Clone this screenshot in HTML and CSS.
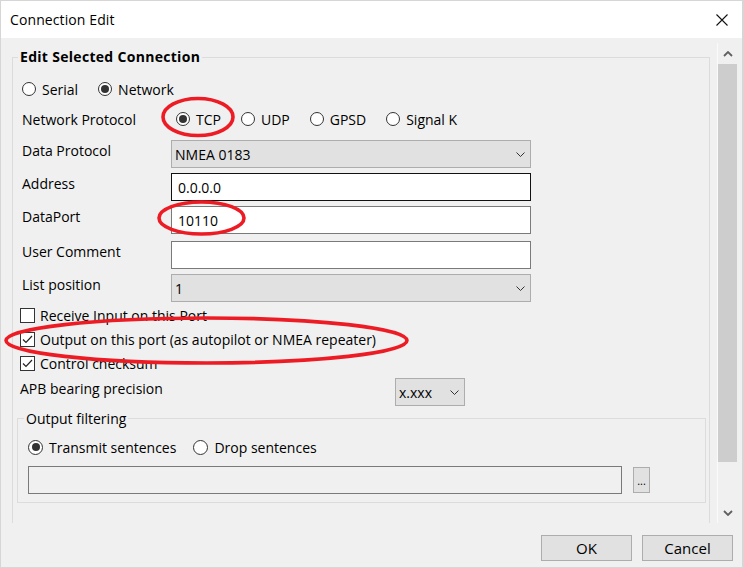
FILE: index.html
```html
<!DOCTYPE html>
<html>
<head>
<meta charset="utf-8">
<link rel="stylesheet" href="styles.css">
</head>
<body>
<div class="window">
  <div class="titlebar">
    <span class="title">Connection Edit</span>
    <svg class="close" width="12" height="12" viewBox="0 0 12 12"><path d="M0.5 0.5L11.5 11.5M11.5 0.5L0.5 11.5" stroke="#111" stroke-width="1.1" fill="none"/></svg>
  </div>
  <div class="body">
    <div class="scroller">
      <div class="pane">
        <div class="group">
          <div class="group-title">Edit Selected Connection</div>
          <div class="row r-type">
            <span class="opt"><span class="radio"></span>Serial</span>
            <span class="opt"><span class="radio on"></span>Network</span>
          </div>
          <div class="row r-proto">
            <span class="proto-label">Network Protocol</span>
            <span class="opt"><span class="radio on"></span>TCP</span>
            <span class="opt"><span class="radio"></span>UDP</span>
            <span class="opt"><span class="radio"></span>GPSD</span>
            <span class="opt"><span class="radio"></span>Signal K</span>
          </div>
          <div class="field f-data">
            <span class="label">Data Protocol</span>
            <div class="select wide"><span>NMEA 0183</span><svg class="chev" width="9" height="5" viewBox="0 0 9 5"><path d="M0.5 0.5L4.5 4.5L8.5 0.5" stroke="#333" fill="none"/></svg></div>
          </div>
          <div class="field f-addr">
            <span class="label">Address</span>
            <div class="input focus">0.0.0.0</div>
          </div>
          <div class="field f-port">
            <span class="label">DataPort</span>
            <div class="input">10110</div>
          </div>
          <div class="field f-comment">
            <span class="label">User Comment</span>
            <div class="input"></div>
          </div>
          <div class="field f-list">
            <span class="label">List position</span>
            <div class="select wide"><span>1</span><svg class="chev" width="9" height="5" viewBox="0 0 9 5"><path d="M0.5 0.5L4.5 4.5L8.5 0.5" stroke="#333" fill="none"/></svg></div>
          </div>
          <div class="check-row c-first"><span class="check"></span>Receive Input on this Port</div>
          <div class="check-row"><span class="check on"><svg width="11" height="9" viewBox="0 0 11 9"><path d="M1 4.5L4 7.5L10 1" stroke="#222" stroke-width="1.2" fill="none"/></svg></span>Output on this port (as autopilot or NMEA repeater)</div>
          <div class="check-row"><span class="check on"><svg width="11" height="9" viewBox="0 0 11 9"><path d="M1 4.5L4 7.5L10 1" stroke="#222" stroke-width="1.2" fill="none"/></svg></span>Control checksum</div>
          <div class="field f-apb">
            <span class="label apb-label">APB bearing precision</span>
            <div class="select small"><span>x.xxx</span><svg class="chev" width="9" height="5" viewBox="0 0 9 5"><path d="M0.5 0.5L4.5 4.5L8.5 0.5" stroke="#333" fill="none"/></svg></div>
          </div>
          <div class="subgroup">
            <div class="sub-title">Output filtering</div>
            <div class="row r-filter">
              <span class="opt tight"><span class="radio big on"></span>Transmit sentences</span>
              <span class="opt tight"><span class="radio big"></span>Drop sentences</span>
            </div>
            <div class="filter-row">
              <div class="filter-input"></div>
              <div class="dots">...</div>
            </div>
          </div>
        </div>
      </div>
      <div class="scrollbar">
        <div class="sb-arrow"><svg width="10" height="6" viewBox="0 0 10 6"><path d="M1 5L5 1L9 5" stroke="#606060" stroke-width="1.8" fill="none"/></svg></div>
        <div class="sb-thumb"></div>
        <div class="sb-track"></div>
        <div class="sb-arrow down"><svg width="10" height="6" viewBox="0 0 10 6"><path d="M1 1L5 5L9 1" stroke="#606060" stroke-width="1.8" fill="none"/></svg></div>
      </div>
    </div>
    <div class="buttons">
      <div class="btn">OK</div>
      <div class="btn">Cancel</div>
    </div>
  </div>
  <svg class="marks" width="744" height="568" viewBox="0 0 744 568">
    <ellipse cx="198" cy="117" rx="35" ry="18.5" stroke="#ed1c24" stroke-width="3.6" fill="none"/>
    <ellipse cx="201.5" cy="218" rx="42.5" ry="16" stroke="#ed1c24" stroke-width="3.6" fill="none"/>
    <ellipse cx="206.5" cy="340.5" rx="200.5" ry="22.5" stroke="#ed1c24" stroke-width="3.6" fill="none"/>
  </svg>
</div>
</body>
</html>
```

FILE: styles.css
```css
html, body {
  margin: 0;
  padding: 0;
}
body {
  background: #d6d6d6;
  width: 744px;
  height: 568px;
  overflow: hidden;
  font-family: "Open Sans", "Noto Sans", sans-serif;
  font-size: 14px;
  color: #000;
}
.window {
  position: relative;
  width: 741px;
  height: 566px;
  margin: 1px 0 0 1px;
  background: #f0f0f0;
  display: flex;
  flex-direction: column;
}
.titlebar {
  height: 37px;
  background: #fff;
  display: flex;
  align-items: center;
  justify-content: space-between;
  padding: 0 14px 0 9px;
  flex: none;
}
.title {
  font-size: 14px;
  line-height: 20px;
  letter-spacing: 0.1px;
}
.body {
  flex: 1;
  display: flex;
  flex-direction: column;
}
.scroller {
  margin: 5px 5px 0 4px;
  height: 480px;
  display: flex;
  flex: none;
}
.pane {
  width: 712px;
  overflow: hidden;
  flex: none;
}
.group {
  margin: 14px 0 0 7px;
  width: 698px;
  height: 520px;
  border: 1px solid #dcdcdc;
  padding-left: 9px;
  box-sizing: border-box;
  display: flex;
  flex-direction: column;
  align-items: flex-start;
}
.group-title {
  margin: -11px 0 0 -4px;
  padding: 0 2px;
  background: #f0f0f0;
  font-weight: bold;
  line-height: 20px;
  letter-spacing: 0.3px;
}
.row {
  display: flex;
  align-items: center;
  height: 24px;
}
.r-type { margin-top: 10px; }
.r-proto { margin-top: 6px; }
.proto-label { width: 154px; }
.opt {
  display: flex;
  align-items: center;
  margin-right: 20px;
  white-space: nowrap;
}
.opt.tight { margin-right: 17px; }
.radio {
  width: 14px;
  height: 14px;
  border: 1px solid #333;
  border-radius: 50%;
  background: #fff;
  box-sizing: border-box;
  margin-right: 6px;
  display: flex;
  align-items: center;
  justify-content: center;
}
.radio.big {
  width: 15px;
  height: 15px;
  margin-right: 6px;
}
.radio.on::after {
  content: "";
  width: 8px;
  height: 8px;
  border-radius: 50%;
  background: #333;
}
.field {
  display: flex;
  align-items: flex-start;
}
.label {
  width: 149px;
  line-height: 20px;
  padding-top: 1px;
  flex: none;
}
.f-data { margin-top: 9px; }
.f-addr { margin-top: 5px; }
.f-port { margin-top: 5px; }
.f-comment { margin-top: 7px; }
.f-list { margin-top: 5px; }
.select {
  height: 28px;
  background: #e1e1e1;
  border: 1px solid #adadad;
  box-sizing: border-box;
  display: flex;
  align-items: center;
  justify-content: space-between;
  padding: 0 5px 0 3px;
}
.select.wide { width: 360px; }
.select.small { width: 70px; }
.chev { flex: none; }
.input {
  width: 360px;
  height: 28px;
  background: #fff;
  border: 1px solid #7a7a7a;
  box-sizing: border-box;
  padding: 0 6px;
  display: flex;
  align-items: center;
}
.input.focus { border-color: #111; }
.check-row {
  display: flex;
  align-items: center;
  height: 24px;
  margin-left: -2px;
  white-space: nowrap;
}
.c-first { margin-top: 1px; }
.check {
  width: 15px;
  height: 15px;
  border: 1px solid #333;
  background: #fff;
  box-sizing: border-box;
  margin-right: 5px;
  display: flex;
  align-items: center;
  justify-content: center;
}
.f-apb {
  margin-top: 3px;
  margin-left: -2px;
}
.apb-label { width: 375px; }
.subgroup {
  margin: 12px 0 0 -5px;
  width: 689px;
  border: 1px solid #dcdcdc;
  box-sizing: border-box;
  padding: 0 0 8px 10px;
  display: flex;
  flex-direction: column;
  align-items: flex-start;
}
.sub-title {
  margin: -10px 0 0 -4px;
  padding: 0 2px;
  background: #f0f0f0;
  line-height: 20px;
}
.r-filter { margin-top: 6px; }
.filter-row {
  margin-top: 7px;
  display: flex;
  align-items: center;
}
.filter-input {
  width: 594px;
  height: 28px;
  border: 1px solid #7a7a7a;
  box-sizing: border-box;
  background: #f0f0f0;
}
.dots {
  margin-left: 11px;
  width: 17px;
  height: 26px;
  background: #e1e1e1;
  border: 1px solid #adadad;
  box-sizing: border-box;
  font-size: 11px;
  display: flex;
  align-items: flex-end;
  justify-content: center;
  line-height: 14px;
  padding-bottom: 4px;
}
.scrollbar {
  width: 20px;
  border-left: 1px solid #fafafa;
  box-sizing: border-box;
  display: flex;
  flex-direction: column;
  flex: none;
}
.sb-arrow {
  height: 21px;
  display: flex;
  align-items: center;
  justify-content: center;
  flex: none;
}
.sb-thumb {
  height: 398px;
  background: #cdcdcd;
  flex: none;
}
.sb-track { flex: 1; }
.buttons {
  display: flex;
  justify-content: flex-end;
  gap: 10px;
  padding: 12px 9px 0 0;
}
.btn {
  width: 91px;
  height: 26px;
  background: #e1e1e1;
  border: 1px solid #adadad;
  box-sizing: border-box;
  display: flex;
  align-items: center;
  justify-content: center;
  font-size: 15px;
}
.marks {
  position: absolute;
  left: -1px;
  top: -1px;
  pointer-events: none;
}
```
